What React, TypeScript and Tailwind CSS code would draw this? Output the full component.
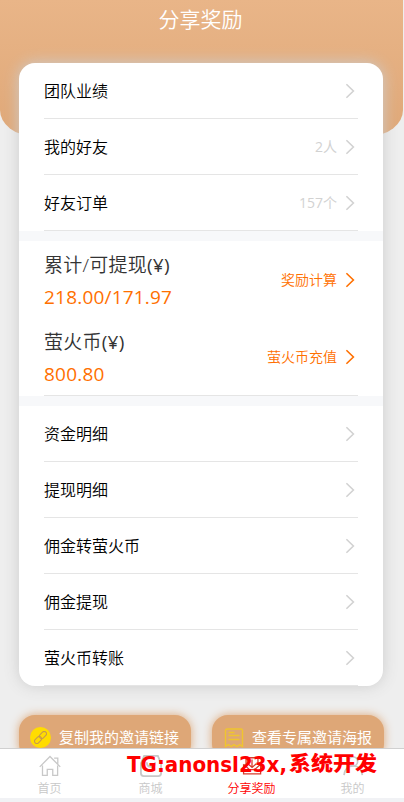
import type { ReactNode } from "react";

const FONT = "font-['Open_Sans','Noto_Sans_CJK_SC',sans-serif]";

const TEAM_ROWS = [
  { label: "团队业绩", value: "" },
  { label: "我的好友", value: "2人" },
  { label: "好友订单", value: "157个" },
];

const FUND_ROWS = ["资金明细", "提现明细", "佣金转萤火币", "佣金提现", "萤火币转账"];

function Chevron() {
  return (
    <svg className="h-4 w-3 shrink-0" viewBox="0 0 12 16" fill="none" stroke="currentColor" strokeWidth="1.6">
      <path d="M2.4 1.2 9.4 8l-7 6.8" />
    </svg>
  );
}

function Row({ label, value }: { label: string; value?: string }) {
  return (
    <div className="mx-[25px] flex h-14 items-center border-b border-[#e5e5e5] pt-px pr-0.5">
      <span className="flex-1 text-base text-black">{label}</span>
      <span className="flex items-center gap-[7px] text-[#d2d2d2]">
        <span className="text-sm font-normal">{value}</span>
        <Chevron />
      </span>
    </div>
  );
}

function Balance({ title, amount, action }: { title: string; amount: string; action: string }) {
  return (
    <div className="flex h-[77px] items-center pr-0.5">
      <div className="flex-1">
        <div className="h-8 pt-0.5 text-[19px] leading-8 tracking-[0.25px] text-[#333]">
          {title}
          <span className="font-normal">(¥)</span>
        </div>
        <div className="h-[33px] pt-0.5 text-[19px] leading-[33px] font-normal tracking-[0.2px] text-[#ff7000]">
          {amount}
        </div>
      </div>
      <div className="flex items-center gap-[7px] text-[#ff7000]">
        <span className="text-sm">{action}</span>
        <Chevron />
      </div>
    </div>
  );
}

function ShareButton({ icon, children }: { icon: ReactNode; children: ReactNode }) {
  return (
    <div className="flex h-[45px] w-[172px] items-center gap-2 rounded-2xl bg-[#dea777] pl-[11px] text-[15px] font-normal whitespace-nowrap text-white shadow-[0_0_10px_#dea777]">
      {icon}
      {children}
    </div>
  );
}

function Tab({ label, active, children }: { label: string; active?: boolean; children: ReactNode }) {
  return (
    <div className={`flex w-[101px] flex-col items-center pt-1.5 ${active ? "text-[#ff0000]" : "text-[#c8c8c8]"}`}>
      <svg className="mr-0.5 h-6 w-6" viewBox="0 0 24 24" fill="none" stroke="currentColor" strokeWidth="1.4">
        {children}
      </svg>
      <span className="mt-[3px] mr-0.5 text-xs leading-[18px]">{label}</span>
    </div>
  );
}

export default function App() {
  return (
    <div className={`relative h-[802px] w-[404px] overflow-hidden bg-[#eee] font-[350] ${FONT}`}>
      <header className="-mb-[73px] h-[136px] w-[403px] rounded-b-[34px_26px] bg-linear-to-b from-[#e9b588] to-[#dfa878] pt-1 pr-0.5 text-center text-[21px] leading-[31px] text-white">
        分享奖励
      </header>

      <main className="relative ml-[19px] h-[623px] w-[364px] overflow-hidden rounded-2xl bg-white shadow-[0_0_15px_#ccc]">
        {TEAM_ROWS.map((row) => (
          <Row key={row.label} {...row} />
        ))}
        <div className="h-2.5 bg-[#f7f8fa]" />
        <div className="mx-[25px] border-b border-[#e5e5e5]">
          <Balance title="累计/可提现" amount="218.00/171.97" action="奖励计算" />
          <Balance title="萤火币" amount="800.80" action="萤火币充值" />
        </div>
        <div className="h-2.5 bg-[#f7f8fa]" />
        {FUND_ROWS.map((label) => (
          <Row key={label} label={label} />
        ))}
      </main>

      <div className="mt-[29px] ml-[19px] flex gap-[21px]">
        <ShareButton
          icon={
            <span className="flex h-[21px] w-[21px] items-center justify-center rounded-full bg-[#ffdc00]">
              <svg className="h-[13px] w-[13px]" viewBox="0 0 13 13" fill="none" stroke="#c7994f" strokeWidth="1.1">
                <rect x="-1" y="4" width="8" height="4.6" rx="2.3" transform="rotate(-45 6.5 6.5) translate(0 .2)" />
                <rect x="6" y="4" width="8" height="4.6" rx="2.3" transform="rotate(-45 6.5 6.5) translate(0 .2)" />
              </svg>
            </span>
          }
        >
          复制我的邀请链接
        </ShareButton>
        <ShareButton
          icon={
            <svg className="ml-px h-5 w-5" viewBox="0 0 19 20" fill="none" stroke="#f0c52e" strokeWidth="1.4">
              <path d="M1 18.5V2.5Q1 1 2.5 1h14Q18 1 18 2.5v16l-2.8-1.8-2.8 1.8-2.9-1.8-2.8 1.8-2.9-1.8zM4 4.5h6M4 7.5h11M4 11.5h11" />
            </svg>
          }
        >
          查看专属邀请海报
        </ShareButton>
      </div>

      {/* Tab bar pinned over the share buttons */}
      <nav className="absolute inset-x-0 top-[748px] flex h-[54px] border-t border-b-4 border-t-[#d0d0d0] border-b-[#f1f2f5] bg-white">
        <Tab label="首页">
          <path d="M.8 13 12 1.6 23.2 13M16.5 3.5h4v6M3.8 11.5v10.8h5.2v-6.6h6v6.6h5.3V11.5" />
        </Tab>
        <Tab label="商城">
          <path strokeWidth="2" d="M4.5 1h15L22 7l1 2v11q0 3-3 3H4q-3 0-3-3V9l1-2zM7.5 8q0 5 4.5 5t4.5-5" />
        </Tab>
        <Tab label="分享奖励" active>
          <path
            stroke="#d83b2c"
            strokeWidth="1.4"
            d="M2.8 10v10.5h18.6V10M5 3h14M5.5 3v8M18.5 3v8M2.8 10l6.5 6h5.5l6.6-6M7.5 9.5l4.6 4 4.6-4M12 5v8"
          />
        </Tab>
        <Tab label="我的">
          <path strokeWidth="1.8" d="M2.2 22q1-10 10-10t10 10" />
          <circle cx="12" cy="7" r="5" strokeWidth="1.8" />
        </Tab>
      </nav>

      <svg className="absolute top-[748px] left-[120px] h-8 w-[270px]" fill="#ff0000">
        <text
          className="font-['DejaVu_Sans',sans-serif] font-bold"
          x="7"
          y="24"
          fontSize="21"
          textLength="160"
          lengthAdjust="spacingAndGlyphs"
        >
          TG:anonsl23x,
        </text>
        <text
          className="font-['Noto_Sans_CJK_SC',sans-serif] font-black"
          x="169"
          y="22.5"
          fontSize="20"
          textLength="88"
          lengthAdjust="spacingAndGlyphs"
        >
          系统开发
        </text>
      </svg>
    </div>
  );
}
